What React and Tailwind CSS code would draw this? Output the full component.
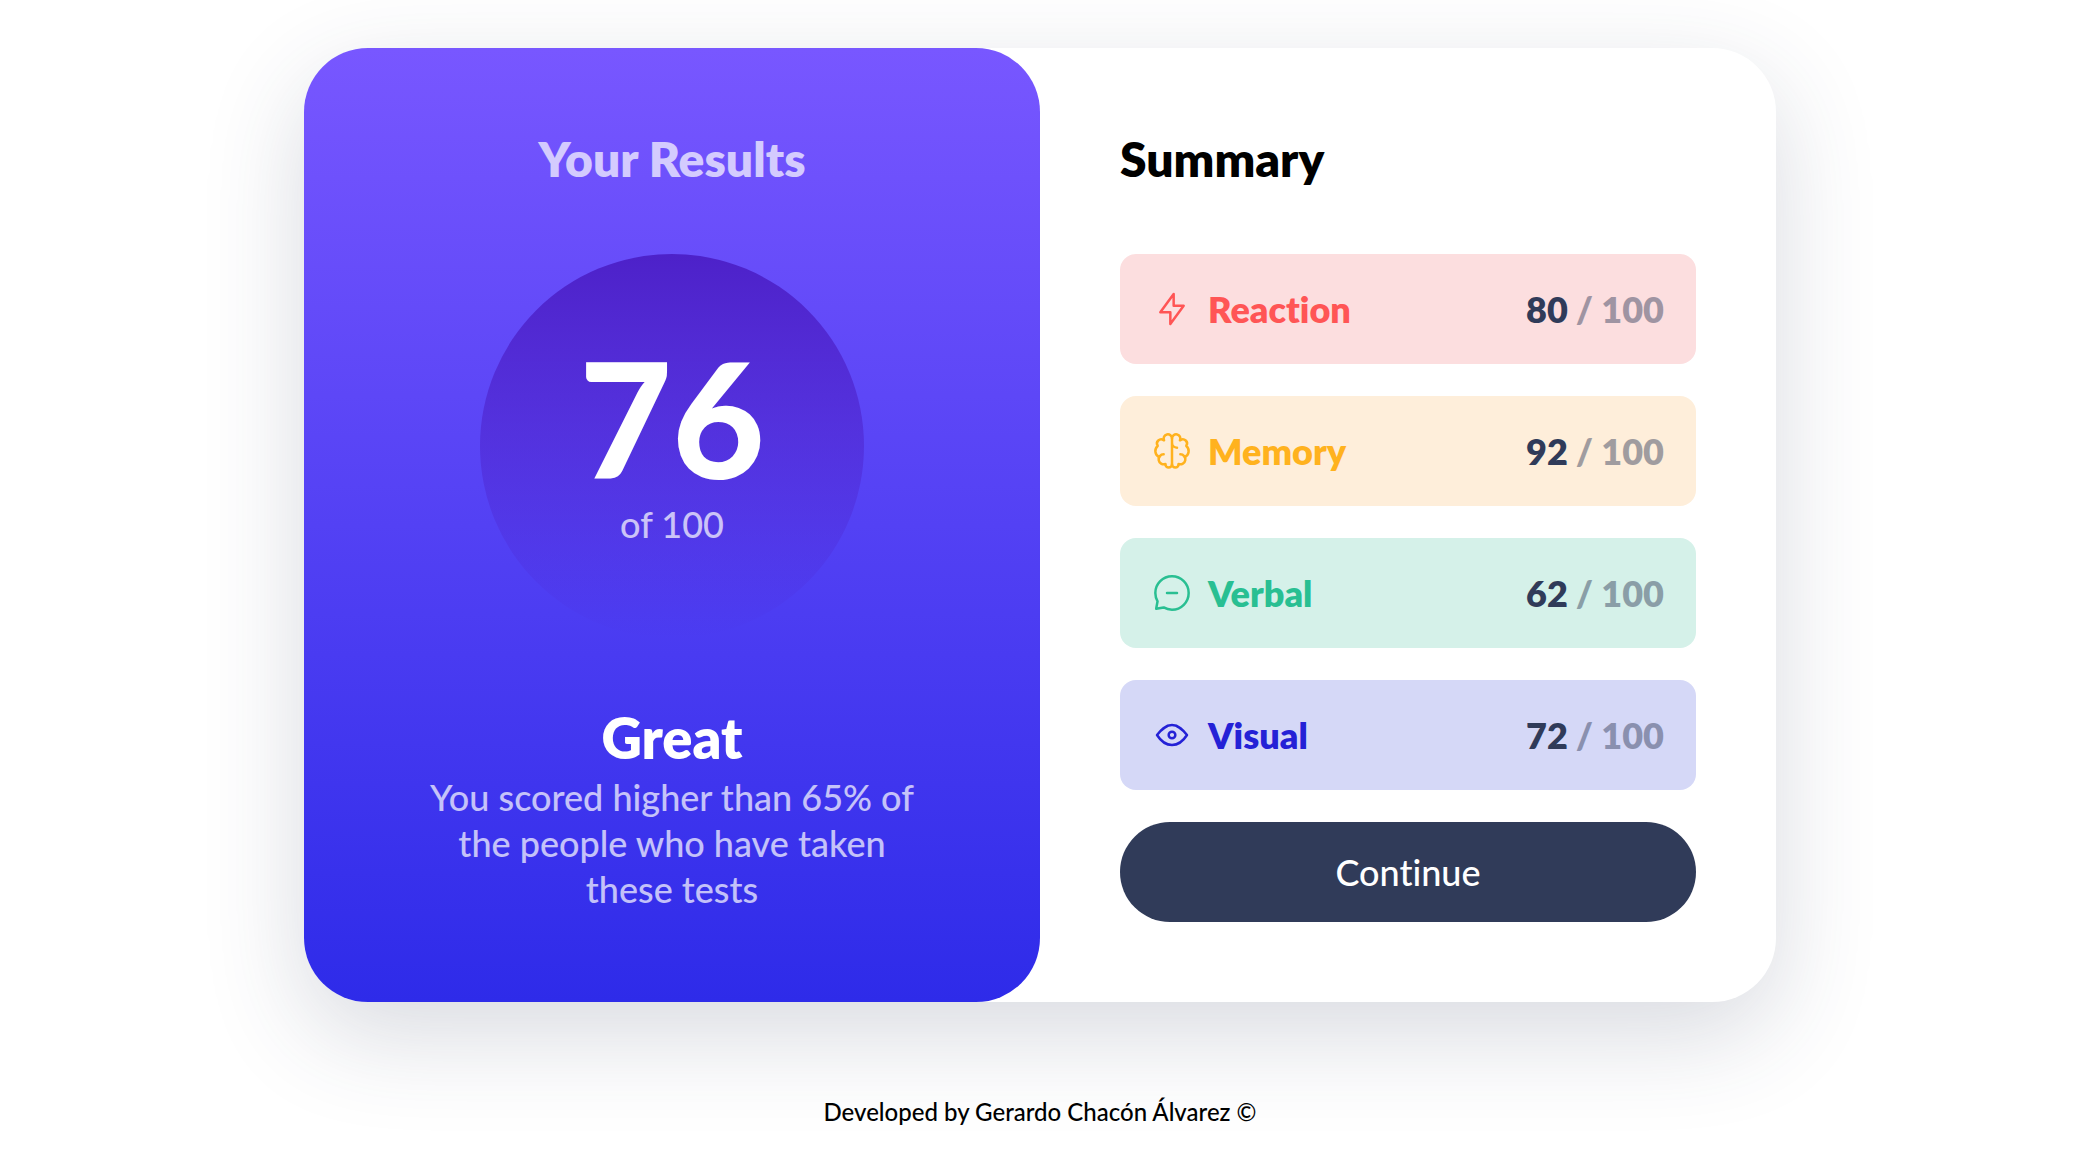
function ReactionIcon() {
  return (
    <path d="M10.833 8.333V2.5l-6.666 9.167h5V17.5l6.667-9.167h-5Z" />
  );
}

function MemoryIcon() {
  return (
    <>
      <path d="M5.833 11.667a2.5 2.5 0 1 0 .834 4.858" />
      <path d="M3.553 13.004a3.333 3.333 0 0 1-.728-5.53m.025-.067a2.083 2.083 0 0 1 2.983-2.824m.199.054A2.083 2.083 0 1 1 10 3.75v12.917a1.667 1.667 0 0 1-3.333 0M10 5.833a2.5 2.5 0 0 0 2.5 2.5m1.667 3.334a2.5 2.5 0 1 1-.834 4.858" />
      <path d="M16.447 13.004a3.334 3.334 0 0 0 .728-5.53m-.025-.067a2.083 2.083 0 0 0-2.983-2.824M10 3.75a2.085 2.085 0 0 1 2.538-2.033 2.084 2.084 0 0 1 1.43 2.92m-.635 12.03a1.667 1.667 0 0 1-3.333 0" />
    </>
  );
}

function VerbalIcon() {
  return (
    <path d="M7.5 10h5M10 18.333A8.333 8.333 0 1 0 1.667 10c0 1.518.406 2.942 1.115 4.167l-.699 3.75 3.75-.699A8.295 8.295 0 0 0 10 18.333Z" />
  );
}

function VisualIcon() {
  return (
    <>
      <path d="M10 11.667a1.667 1.667 0 1 0 0-3.334 1.667 1.667 0 0 0 0 3.334Z" />
      <path d="M17.5 10c-1.574 2.492-4.402 5-7.5 5s-5.926-2.508-7.5-5C4.416 7.632 6.66 5 10 5s5.584 2.632 7.5 5Z" />
    </>
  );
}

const categories = [
  { name: "Reaction", score: 80, Icon: ReactionIcon, tint: "bg-[#fcdedf]", ink: "text-[#ff5555]" },
  { name: "Memory", score: 92, Icon: MemoryIcon, tint: "bg-[#feeeda]", ink: "text-[#ffb21e]" },
  { name: "Verbal", score: 62, Icon: VerbalIcon, tint: "bg-[#d5f1e9]", ink: "text-[#29bf92]" },
  { name: "Visual", score: 72, Icon: VisualIcon, tint: "bg-[#d5d8f7]", ink: "text-[#2421d6]" },
];

function CategoryRow({ name, score, Icon, tint, ink }) {
  return (
    <li className={`flex h-[110px] items-center justify-between rounded-2xl px-8 font-extrabold ${tint}`}>
      <span className={`flex items-center gap-4 ${ink}`}>
        <svg
          viewBox="0 0 20 20"
          className="size-10 fill-none stroke-current stroke-[1.25]"
          strokeLinecap="round"
          strokeLinejoin="round"
          aria-hidden="true"
        >
          <Icon />
        </svg>
        {name}
      </span>
      <span className="flex gap-2 text-[#303b59]">
        <span>{score}</span>
        <span className="opacity-45">/ 100</span>
      </span>
    </li>
  );
}

export default function App() {
  return (
    <div className="flex flex-col items-center overflow-hidden bg-white px-8 pt-12 pb-12 font-[Lato,sans-serif] text-4xl leading-[46px] text-black [font-variant-ligatures:none]">
      <main className="grid w-full max-w-[1472px] grid-cols-2 rounded-[64px] bg-white shadow-[0_32px_100px_rgba(48,59,89,0.19)]">
        <section className="flex flex-col items-center rounded-[64px] bg-linear-to-b/srgb from-[#7857ff] to-[#2e2be9] p-20 text-center text-white">
          <h1 className="text-5xl leading-[62px] font-extrabold opacity-70">Your Results</h1>
          <div className="mt-16 flex size-96 flex-col items-center justify-center rounded-full bg-linear-to-b/srgb from-[#4d21c9] to-[#2521c9]/0 pb-2">
            <p className="mb-1 text-[160px] leading-none font-black">76</p>
            <p className="font-medium opacity-70">of 100</p>
          </div>
          <h2 className="mt-16 text-[56px] leading-[72px] font-extrabold">Great</h2>
          <p className="max-w-[512px] font-medium opacity-70">
            You scored higher than 65% of the people who have taken these tests
          </p>
        </section>
        <section className="flex flex-col p-20">
          <h2 className="text-5xl leading-[62px] font-extrabold">Summary</h2>
          <ul className="mt-16 flex flex-col gap-8">
            {categories.map((category) => (
              <CategoryRow key={category.name} {...category} />
            ))}
          </ul>
          <button type="button" className="mt-8 h-[100px] cursor-pointer rounded-full bg-[#303b59] font-medium text-white">
            Continue
          </button>
        </section>
      </main>
      <footer className="mt-24 text-2xl leading-7 font-medium">
        Developed by Gerardo Chacón Álvarez ©
      </footer>
    </div>
  );
}
